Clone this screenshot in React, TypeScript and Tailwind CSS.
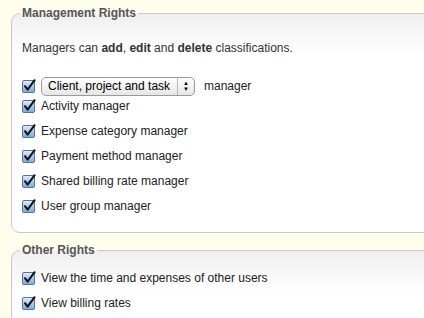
import React from "react";

const font = { fontFamily: '"Liberation Sans", Arial, sans-serif' };

const Check: React.FC = () => (
  <svg width="14" height="14" viewBox="0 0 14 14" className="shrink-0">
    <defs>
      <linearGradient id="cbFill" x1="0" y1="0" x2="0" y2="1">
        <stop offset="0" stopColor="#e4eefa" />
        <stop offset="0.5" stopColor="#a9c8ec" />
        <stop offset="1" stopColor="#7fa9dc" />
      </linearGradient>
    </defs>
    <rect x="0.5" y="1.5" width="12" height="12" rx="1.5" fill="url(#cbFill)" stroke="#5a7396" />
    <path d="M3 7.2 L5.6 10.6 L12.6 1.2" fill="none" stroke="#111" strokeWidth="2" strokeLinecap="round" strokeLinejoin="round" />
  </svg>
);

const CheckRow: React.FC<{ children: React.ReactNode; className?: string }> = ({
  children,
  className = "h-[25px]",
}) => (
  <label className={`flex items-center gap-[5px] text-[12px] text-[#222] ${className}`}>
    <Check />
    {children}
  </label>
);

const Rights: React.FC<{ title: string; children: React.ReactNode; className?: string }> = ({
  title,
  children,
  className = "",
}) => (
  <fieldset
    className={`w-[470px] border border-[#c9c9c9] rounded-l-[9px] pl-[10px] bg-gradient-to-b from-[#efefef] to-white to-[40px] ${className}`}
  >
    <legend className="px-[2px] -ml-[2px] text-[12px] leading-[15px] font-bold text-[#555]">{title}</legend>
    {children}
  </fieldset>
);

export default function App() {
  const items = [
    "Activity manager",
    "Expense category manager",
    "Payment method manager",
    "Shared billing rate manager",
    "User group manager",
  ];
  return (
    <div className="w-[424px] h-[318px] overflow-hidden bg-[#fffdec] pl-[11px] pt-[6px]" style={font}>
      <Rights title="Management Rights" className="pb-[14px]">
        <p className="mt-[20px] text-[12px] leading-[15px] text-[#333]">
          Managers can <b>add</b>, <b>edit</b> and <b>delete</b> classifications.
        </p>
        <div className="mt-[20px] flex flex-col">
          <CheckRow className="h-[20px] mb-[-3px]">
            <span className="flex items-center h-[19px] w-[154px] rounded-[5px] border border-[#9a9a9a] bg-gradient-to-b from-white to-[#e6e6e6] text-[12px] text-black">
              <span className="flex-1 pl-[6px]">Client, project and task</span>
              <span className="flex h-full w-[17px] flex-col items-center justify-center border-l border-[#b5b5b5] text-[6px] leading-[6px]">
                <span>▲</span>
                <span>▼</span>
              </span>
            </span>
            <span className="ml-[4px]">manager</span>
          </CheckRow>
          {items.map((label) => (
            <CheckRow key={label}>{label}</CheckRow>
          ))}
        </div>
      </Rights>
      <Rights title="Other Rights" className="mt-[10px] pb-[20px]">
        <div className="mt-[7px] flex flex-col">
          <CheckRow>View the time and expenses of other users</CheckRow>
          <CheckRow>View billing rates</CheckRow>
        </div>
      </Rights>
    </div>
  );
}
